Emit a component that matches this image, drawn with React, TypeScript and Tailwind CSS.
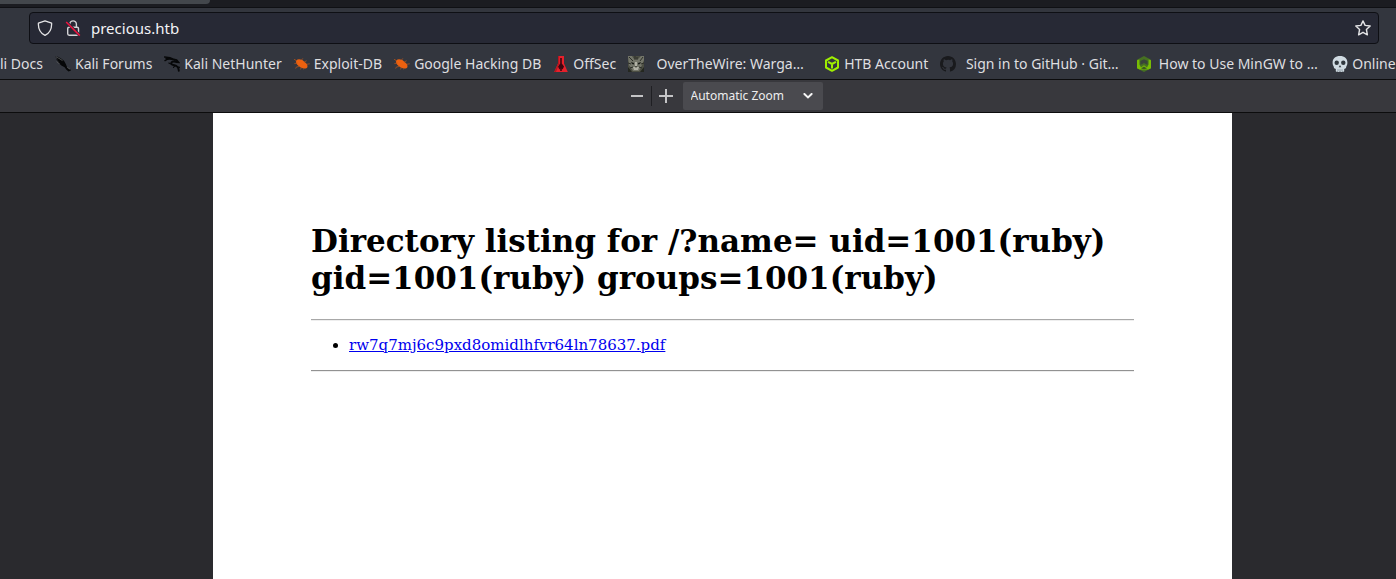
import type { ReactNode } from "react";

function KaliForumsIcon() {
  return (
    <svg viewBox="0 0 16 16" className="size-4 shrink-0" aria-hidden="true">
      <path d="M0 .6L3 .8L6 2.6L9 4.8L10.8 8L12 11L15 13L16 14.6L13.5 15.4L11.2 13.6L9.6 11.2L6.3 9.4L4 7.2L1.6 6L3.8 5.6L.8 3.6L2.8 3.4Z" fill="#060708" />
      <path d="M.8 .8L4 2.4L7.5 4.6M1.6 5.8L4.5 7.6M12.2 11.4L15 13.2" stroke="#7c7e80" strokeWidth=".6" fill="none" />
    </svg>
  );
}

function KaliDragonIcon() {
  return (
    <svg viewBox="0 0 16 16" className="size-4 shrink-0" aria-hidden="true">
      <g fill="none" stroke="#060708" strokeLinecap="round">
        <path d="M.5 1C4 1 7 1.4 10.5 3.6M1 4.6C3.5 2.8 6 2.8 9 3.6M2 2.6L6 2.4" strokeWidth="1.4" />
        <path d="M10.5 3.6L12.5 4.2L14.3 6.2L12 6C8.5 4.5 6 6.8 8 8.4C10 10 14.5 8.5 14.8 14.8" strokeWidth="1.9" />
        <path d="M7 8L4.8 7M11 9.5L9.5 11.5M14 11L16 11.4" strokeWidth="1.1" />
      </g>
    </svg>
  );
}

function BugIcon() {
  return (
    <svg viewBox="0 0 16 16" className="size-4 shrink-0" aria-hidden="true">
      <path d="M2.2 4.4C4 2.6 7.6 3.2 9.8 5.2L12.4 7.4C13.8 9 14 11.6 12.4 12.2C10 13 7 12 5 10.2C2.8 8.4 1.2 6.2 2.2 4.4Z" fill="#ee610f" />
      <g stroke="#a9531f" strokeWidth=".8" fill="none">
        <path d="M3 5L0 3.2M3.4 7L.4 7.6M5.6 10.4L2.4 11L1.6 12.6M8 11.5L6 13.4M7.6 4L8.8 2.4M10.2 6L12.6 4.8M13 8.2L15.8 7.8M10 12L9.6 13.4" />
      </g>
    </svg>
  );
}

function OffSecIcon() {
  return (
    <svg viewBox="0 0 16 16" className="size-4 shrink-0" aria-hidden="true">
      <path d="M5 0H11V7.6L14.8 16H1.2L5 7.6Z" fill="#e6202b" />
      <path d="M7.2 2H8.8V7.4L11 10.4L9.6 13.4L8.8 12.4V15H7.2V12.4L6.4 13.4L5 10.4L7.2 7.4Z" fill="#3b0710" />
      <path d="M5 0H6.2V8L3 16H1.2L5 7.6Z" fill="#b9161f" />
    </svg>
  );
}

function CatIcon() {
  return (
    <svg viewBox="0 0 16 16" className="size-4 shrink-0" aria-hidden="true">
      <rect width="16" height="16" fill="#4b4d42" />
      <path d="M0 0H4L6 3H10L13 0H16V4L14 9L11 15H5L1 9Z" fill="#74766a" />
      <path d="M1 1L5 5M15 1L12 5M7 0V4M9 1V4M0 7L3 8M16 7L13 8M2 12L5 11M14 12L11 11" stroke="#2c2e28" strokeWidth="1" />
      <path d="M3 6L6 7L6 8.4L4 8ZM13 6L10 7L10 8.4L12 8Z" fill="#1a1d18" />
      <path d="M7 6H9V10L8 11L7 10ZM5 11H7L8 12L9 11H11L10 14H6Z" fill="#b2b2a6" />
      <path d="M7 10H9L8 11.4ZM0 11L4 16H0ZM16 11L12 16H16Z" fill="#242720" />
    </svg>
  );
}

function CubeIcon() {
  return (
    <svg viewBox="0 0 16 16" className="size-4 shrink-0" aria-hidden="true">
      <g fill="none" stroke="#9fef00" strokeWidth="2" strokeLinejoin="round" strokeLinecap="round">
        <path d="M8 1.2L14 4.5V11.5L8 14.8L2 11.5V4.5Z" />
        <path d="M4.6 6.2L8 8L11.4 6.2M8 8V11.8" />
      </g>
    </svg>
  );
}

function OctocatIcon() {
  return (
    <svg viewBox="0 0 16 16" className="size-4 shrink-0" aria-hidden="true">
      <path
        fill="#191a1d"
        d="M8 0C3.58 0 0 3.58 0 8c0 3.54 2.29 6.53 5.47 7.59.4.07.55-.17.55-.38 0-.19-.01-.82-.01-1.49-2.01.37-2.53-.49-2.69-.94-.09-.23-.48-.94-.82-1.13-.28-.15-.68-.52-.01-.53.63-.01 1.08.58 1.23.82.72 1.21 1.87.87 2.33.66.07-.52.28-.87.51-1.07-1.78-.2-3.64-.89-3.64-3.95 0-.87.31-1.59.82-2.15-.08-.2-.36-1.02.08-2.12 0 0 .67-.21 2.2.82A7.6 7.6 0 0 1 8 3.86c.68 0 1.36.09 2 .27 1.53-1.04 2.2-.82 2.2-.82.44 1.1.16 1.92.08 2.12.51.56.82 1.27.82 2.15 0 3.07-1.87 3.75-3.65 3.95.29.25.54.73.54 1.48 0 1.07-.01 1.93-.01 2.2 0 .21.15.46.55.38A8.01 8.01 0 0 0 16 8c0-4.42-3.58-8-8-8z"
      />
    </svg>
  );
}

function HexIcon() {
  return (
    <svg viewBox="0 0 16 16" className="size-4 shrink-0" aria-hidden="true">
      <path d="M8 0L15 3.8V12.2L8 16L1 12.2V3.8Z" fill="#467022" />
      <path d="M1 4.2L3.4 3.4V8.5L5 11.4L8 9.2L11 11.4L12.6 8.5V3.4L15 4.2V12.2L12.5 13.5H3.5L1 12.2Z" fill="#78bd04" />
      <path d="M4.4 5L8 3.2L11.6 5V9L8 7L4.4 9Z" fill="#39443a" />
      <path d="M5 12.4L8 10.4L11 12.4L8 13.2Z" fill="#3b5a22" />
    </svg>
  );
}

function SkullIcon() {
  return (
    <svg viewBox="0 0 16 16" className="size-4 shrink-0" aria-hidden="true">
      <path d="M8 0C12.5 0 15.4 2.6 15.4 6.4C15.4 8 15 9.2 14.4 10.2C14 11 14.4 12 13.2 12.6L12.2 13V15.2Q11.4 16.4 10.4 15.4Q9.4 16.4 8 15.6Q6.6 16.4 5.6 15.4Q4.6 16.4 3.8 15.2V13L2.8 12.6C1.6 12 2 11 1.6 10.2C1 9.2 .6 8 .6 6.4C.6 2.6 3.5 0 8 0Z" fill="#d0dbe2" />
      <circle cx="4.7" cy="6.8" r="2.2" fill="#30373d" />
      <circle cx="11.3" cy="6.8" r="2.2" fill="#30373d" />
      <path d="M8 9L9.3 11.2H6.7Z" fill="#30373d" />
      <path d="M6 13.2V15.4M8 13.2V15.6M10 13.2V15.4" stroke="#7d8b94" strokeWidth=".8" />
    </svg>
  );
}

type Bookmark = { label: string; icon?: ReactNode; wide?: boolean };

const bookmarks: Bookmark[] = [
  { label: "li Docs" },
  { label: "Kali Forums", icon: <KaliForumsIcon /> },
  { label: "Kali NetHunter", icon: <KaliDragonIcon /> },
  { label: "Exploit-DB", icon: <BugIcon /> },
  { label: "Google Hacking DB", icon: <BugIcon /> },
  { label: "OffSec", icon: <OffSecIcon /> },
  { label: "OverTheWire: Warga…", icon: <CatIcon />, wide: true },
  { label: "HTB Account", icon: <CubeIcon /> },
  { label: "Sign in to GitHub · Git…", icon: <OctocatIcon />, wide: true },
  { label: "How to Use MinGW to …", icon: <HexIcon />, wide: true },
  { label: "Online", icon: <SkullIcon /> },
];

function AddressBar() {
  return (
    <div className="ml-[29px] mr-[17px] flex h-8 items-center rounded border border-[#0e0f14] bg-[#272935] px-[7px] text-[#e4e4e6]">
      <button type="button" aria-label="Tracking protection" className="shrink-0">
        <svg viewBox="0 0 16 16" className="size-4" fill="none" stroke="currentColor" strokeWidth="1.3" strokeLinejoin="round">
          <path d="M8 .8L14.6 3.1C14.9 8.5 12.6 13 8 15.4C3.4 13 1.1 8.5 1.4 3.1Z" />
        </svg>
      </button>
      <button type="button" aria-label="Connection not secure" className="ml-3 shrink-0">
        <svg viewBox="0 0 16 16" className="size-4" fill="none">
          <rect x="2.7" y="7.2" width="10.8" height="8" rx="1.4" stroke="#d3d3d6" strokeWidth="1.4" />
          <path d="M4.8 7V4.2C4.8 -.2 11.4 -.2 11.4 4.2V7" stroke="#d3d3d6" strokeWidth="1.4" />
          <path d="M1.4 2L15 15.6" stroke="#272935" strokeWidth="3" />
          <path d="M1.2 2L14.8 15.6" stroke="#ee1440" strokeWidth="1.6" />
        </svg>
      </button>
      <input
        type="text"
        aria-label="Address"
        defaultValue="precious.htb"
        className="ml-[10px] min-w-0 flex-1 bg-transparent text-[15px] leading-5 text-[#f3f3f5] outline-none"
      />
      <button type="button" aria-label="Bookmark this page" className="shrink-0">
        <svg viewBox="0 0 16 16" className="size-4" fill="none" stroke="currentColor" strokeWidth="1.4" strokeLinejoin="round">
          <path d="M8 .9L10.1 5.4L15.2 6L11.4 9.5L12.4 14.8L8 12.3L3.6 14.8L4.6 9.5L.8 6L5.9 5.4Z" />
        </svg>
      </button>
    </div>
  );
}

export default function App() {
  return (
    <div className="flex min-h-screen flex-col overflow-hidden bg-[#2a2a2e] font-['Noto_Sans',sans-serif]">
      <div className="h-2 shrink-0 border-b border-[#0f1014] bg-[#1b1c21]">
        <div className="h-1 w-[210px] rounded-br bg-[#43474c]" />
      </div>

      <header className="h-18 shrink-0 border-b border-[#0c0c0d] bg-[#33363e] pt-1">
        <AddressBar />
        <nav aria-label="Bookmarks" className="mt-2 flex h-6 items-center gap-3 overflow-hidden whitespace-nowrap text-[14px] leading-6 text-[#dfdfe0]">
          {bookmarks.map(({ label, icon, wide }) => (
            <a key={label} href="#" className="flex shrink-0 items-center gap-1">
              {icon}
              <span className={wide ? "min-w-[164px] text-center" : ""}>{label}</span>
            </a>
          ))}
        </nav>
      </header>

      <div className="flex h-[33px] shrink-0 items-center justify-center border-b border-[#0c0c0d] bg-[#38383d] pl-[49px]">
        <button type="button" aria-label="Zoom out" className="flex h-7 w-7 items-center justify-center">
          <span className="h-[2px] w-3 bg-[#c4c4c6]" />
        </button>
        <span className="h-5 w-px bg-[#1f1f23]" />
        <button type="button" aria-label="Zoom in" className="flex h-7 w-7 items-center justify-center">
          <svg viewBox="0 0 14 14" className="size-[14px]">
            <path d="M0 6H6V0H8V6H14V8H8V14H6V8H0Z" fill="#c4c4c6" />
          </svg>
        </button>
        <div className="relative ml-[3px]">
          <select aria-label="Zoom" className="block h-7 w-[140px] appearance-none rounded-xs bg-[#4a4a4f] pl-2 text-[12px] text-[#ededee]">
            <option>Automatic Zoom</option>
          </select>
          <svg viewBox="0 0 10 6" className="pointer-events-none absolute top-[11px] right-[10px] h-[6px] w-[10px]">
            <path d="M1.4 1L5 4.4L8.6 1" fill="none" stroke="#f5f5f5" strokeWidth="2" strokeLinecap="round" />
          </svg>
        </div>
      </div>

      <main className="flex flex-1 justify-center pl-[49px]">
        <article className="w-full max-w-[1019px] bg-white px-[98px] pt-[110px] font-['DejaVu_Serif',serif] text-black">
          <h1 className="text-[31px] leading-[37px] font-bold">
            Directory listing for /?name= uid=1001(ruby) gid=1001(ruby) groups=1001(ruby)
          </h1>
          <hr className="mt-[22px] h-[2px] border-t border-b border-t-[#a8a8a8] border-b-[#eeeeee]" />
          <ul className="my-4 list-disc pl-[38px] text-[15px] leading-[17px]">
            <li>
              <a href="#" className="text-[#0000ee] underline">rw7q7mj6c9pxd8omidlhfvr64ln78637.pdf</a>
            </li>
          </ul>
          <hr className="h-[2px] border-t border-b border-t-[#929292] border-b-[#eeeeee]" />
        </article>
      </main>
    </div>
  );
}
